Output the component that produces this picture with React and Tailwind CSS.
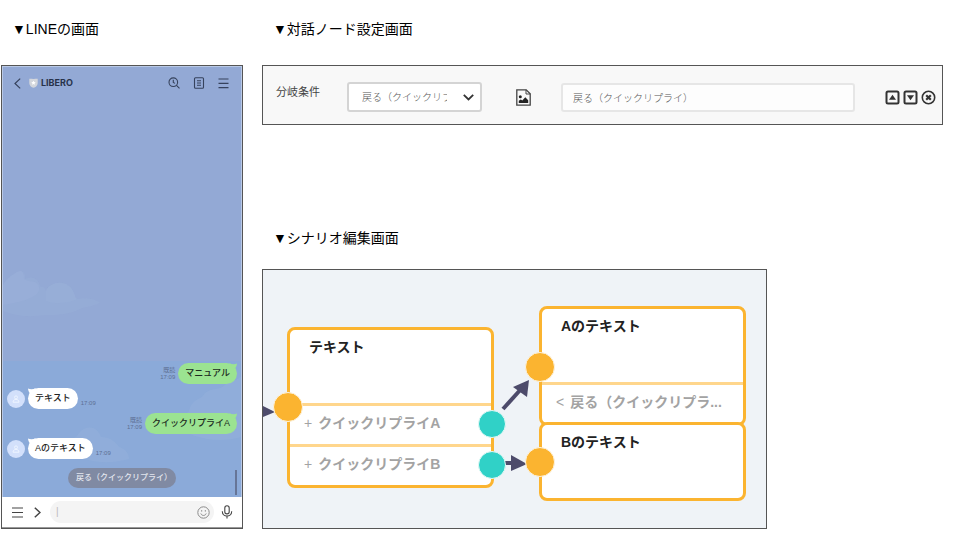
import { useState } from "react"

const messages = [
    { id: 1, from: 'user', text: 'マニュアル', time: '17:09' },
    { id: 2, from: 'bot', text: 'テキスト', time: '17:09' },
    { id: 3, from: 'user', text: 'クイックリプライA', time: '17:09' },
    { id: 4, from: 'bot', text: 'Aのテキスト', time: '17:09' },
];

const backLabel = '戻る（クイックリプライ）';

const shorten = (text, max) => (text.length > max ? `${text.slice(0, max)}...` : text);

const Heading = ({ children, className }) => (
    <h2 className={`pl-[11px] text-[14px] leading-5 text-black ${className}`}>{children}</h2>
);

const Cloud = () => (
    <svg className="absolute left-0 bottom-10 w-[100px] h-[54px]" viewBox="0 0 100 54" fill="#9db2dc">
        <path opacity=".3" d="M0 18C4 10 10 8 14 5c6-3 9 2 8 7 8-4 14 0 15 8 4-1 5 2 6 4 3-10 22-12 27 0 2 4 2 6 4 8 10-2 20 1 23 4-9 4-16 4-20 6-12 6-24 6-34 6-14 2-28 2-43-4z" />
        <path opacity=".35" d="M0 18C4 10 10 8 14 5c6-3 7 2 7 7 4 4 14 0 15 8 2 8-10 14-36 18z" />
        <path opacity=".3" d="M43 24c3-10 22-12 27 0 2 4 2 6 4 8-8 4-22 6-31 2z" />
    </svg>
);

const ChatCloud = () => (
    <svg className="absolute inset-0 w-full h-full" viewBox="0 0 238 136" preserveAspectRatio="none" fill="#9cb6df">
        <path opacity=".3" d="M168 60c6-8 14-4 18-10 4-14 12-10 16-18 8-6 14-2 20-8 4-4 10-4 16-8v60c-20 6-50 4-70-16z" />
        <path opacity=".3" d="M62 88c2-12 10-8 14-16 6-8 18-8 22 4 8 0 14 4 18 10 6 2 10 6 10 12-20 6-46 4-64-10z" />
    </svg>
);

const Avatar = () => (
    <span className="flex w-[18px] h-[18px] shrink-0 items-center justify-center rounded-full bg-[#d3e0fb]">
        <svg className="w-2 h-2" viewBox="0 0 8 8" fill="none" stroke="#eef4ff" strokeWidth="1">
            <circle cx="4" cy="2.4" r="1.5" />
            <path d="M1 7.2c0-2 1.6-2.8 3-2.8s3 .8 3 2.8z" />
        </svg>
    </span>
);

const UserMessage = ({ text, time }) => (
    <li className="flex items-center justify-end gap-[3px] pr-1">
        <div className="text-right text-[6px] leading-[7px] text-[#5d6f93]">
            <p>既読</p>
            <p>{time}</p>
        </div>
        <p className="relative h-[21px] rounded-full bg-[#9be391] px-[7px] text-[9px] leading-[20px] font-medium text-[#1c2a1e]">
            {text}
            <svg className="absolute right-0 top-0 w-2 h-2" viewBox="0 0 8 8" fill="#9be391">
                <path d="M0 0C3 1.6 6 1.4 8 .4 7.8 2.6 7 4.4 5.6 6z" />
            </svg>
        </p>
    </li>
);

const BotMessage = ({ text, time }) => (
    <li className="flex items-center pl-1">
        <Avatar />
        <p className="relative ml-[3px] h-[21px] rounded-full bg-white px-[7px] text-[9px] leading-[20px] font-medium text-[#222]">
            {text}
            <svg className="absolute left-0 top-0 w-2 h-2" viewBox="0 0 8 8" fill="#fff">
                <path d="M8 0C5 1.6 2 1.4 0 .4.2 2.6 1 4.4 2.4 6z" />
            </svg>
        </p>
        <span className="ml-[3px] self-end text-[6px] leading-[11px] text-[#5d6f93]">{time}</span>
    </li>
);

const LinePhone = () => {
    const [draft, setDraft] = useState('');

    return (
        <div className="border border-[#555]">
            <div className="border-x border-t border-[#b9c9e6]">
                <div className="relative flex min-h-[294px] flex-col bg-[#93a9d5]">
                    <header className="flex h-8 items-center pl-[11px] pr-3 text-[#36425c]">
                        <button type="button" aria-label="戻る">
                            <svg className="w-[7px] h-[11px]" viewBox="0 0 7 11" fill="none" stroke="currentColor" strokeWidth="1.2">
                                <path d="M6.2.6 1 5.5l5.2 4.9" />
                            </svg>
                        </button>
                        <svg className="ml-2 w-[9px] h-[10px]" viewBox="0 0 9 10">
                            <path d="M.3.8C3 .9 6 .9 8.7.8v4.4c0 2.4-2 3.8-4.2 4.6C2.3 9 .3 7.6.3 5.2z" fill="#d3d6dc" />
                            <path d="m4.5 2.8.7 1.3 1.5.2-1.1 1 .3 1.5-1.4-.7-1.4.7.3-1.5-1.1-1 1.5-.2z" fill="#fff" />
                        </svg>
                        <h1 className="ml-[3px] text-[9px] leading-4 font-bold text-[#27324a] font-['Inter','Liberation_Sans',sans-serif]">LIBERO</h1>
                        <div className="ml-auto flex items-center gap-[13px]">
                            <button type="button" aria-label="検索">
                                <svg className="w-3 h-3" viewBox="0 0 12 12" fill="none" stroke="currentColor" strokeWidth="1.1">
                                    <circle cx="5.3" cy="5.2" r="4.3" />
                                    <path d="m8.500 8.400 3 2.900M5.300 2.800v2.600l1.700 1" />
                                </svg>
                            </button>
                            <button type="button" aria-label="ノート">
                                <svg className="w-3 h-3" viewBox="0 0 12 12" fill="none" stroke="currentColor" strokeWidth="1.1">
                                    <rect x="1.5" y=".8" width="9" height="10.4" rx="1" />
                                    <path d="M4 3.800h4M4 6h4M4 8.200h4" />
                                </svg>
                            </button>
                            <button type="button" aria-label="メニュー">
                                <svg className="w-[11px] h-3" viewBox="0 0 11 12" fill="none" stroke="currentColor" strokeWidth="1.2">
                                    <path d="M.5 2h10M.5 6.300h10M.5 10.600h10" />
                                </svg>
                            </button>
                        </div>
                    </header>
                    <Cloud />
                </div>

                <div className="relative bg-[#8baad9] pt-[2px] pb-[9px]">
                    <ChatCloud />
                    <ul className="relative flex flex-col gap-1">
                        {messages.map(({ id, from, text, time }) =>
                            from === 'user'
                                ? <UserMessage key={id} text={text} time={time} />
                                : <BotMessage key={id} text={text} time={time} />
                        )}
                    </ul>
                    <button type="button" className="relative mx-auto mt-[9px] block h-5 rounded-full bg-[#808aa3] pl-2 pr-1 text-[8px] leading-5 font-medium text-[#e3e6ee]">
                        {backLabel}
                    </button>
                    <span className="absolute right-1 bottom-[2px] h-[25px] w-[2px] bg-[#667597]" />
                </div>
            </div>

            <footer className="flex h-[30px] items-center bg-white pl-[10px] pr-[9px] text-[#444]">
                <button type="button" aria-label="メニュー">
                    <svg className="w-[11px] h-[11px]" viewBox="0 0 11 11" fill="none" stroke="currentColor" strokeWidth="1.1">
                        <path d="M0 1h11M0 5.500h11M0 10h11" />
                    </svg>
                </button>
                <button type="button" aria-label="開く" className="ml-[11px]">
                    <svg className="w-[7px] h-[11px]" viewBox="0 0 7 11" fill="none" stroke="currentColor" strokeWidth="1.5">
                        <path d="m.8.8 5.200 4.700L.8 10.200" />
                    </svg>
                </button>
                <div className="ml-[9px] flex h-[22px] min-w-0 flex-1 items-center rounded-full bg-[#f4f4f4] pl-[6px] pr-1">
                    <input
                        type="text"
                        aria-label="メッセージ"
                        value={draft}
                        placeholder="|"
                        onChange={(e) => setDraft(e.target.value)}
                        className="w-full min-w-0 bg-transparent text-[10px] leading-4 outline-none placeholder:text-[#bbb]"
                    />
                    <button type="button" aria-label="スタンプ" className="text-[#8a8a8a]">
                        <svg className="w-[13px] h-[13px]" viewBox="0 0 13 13" fill="none" stroke="currentColor" strokeWidth="1">
                            <circle cx="6.5" cy="6.5" r="5.7" />
                            <path d="M3.800 7.500c.9 2.600 4.500 2.600 5.400 0" />
                            <path d="M4.600 4.300v1.200M8.400 4.300v1.200" strokeWidth="1.2" />
                        </svg>
                    </button>
                </div>
                <button type="button" aria-label="音声" className="ml-[7px]">
                    <svg className="w-3 h-[14px]" viewBox="0 0 12 14" fill="none" stroke="currentColor" strokeWidth="1.1">
                        <rect x="3.8" y=".7" width="4.4" height="8.2" rx="2.2" />
                        <path d="M1.300 6.200c0 6.400 9.400 6.400 9.400 0M6 11v2.500" />
                    </svg>
                </button>
            </footer>
            <div className="h-px bg-[#999]" />
        </div>
    );
};

const NodeSettings = () => {
    const [condition, setCondition] = useState('back');
    const [label, setLabel] = useState(backLabel);

    return (
        <form className="flex items-center border border-[#555] bg-[#f8f8f8] pt-4 pb-3 pl-[13px] pr-[6px] text-[#333]">
            <label htmlFor="condition" className="mb-[10px] w-[71px] shrink-0 text-[11px] leading-4 text-[#444]">分岐条件</label>
            <div className="relative w-[135px] shrink-0">
                <select
                    id="condition"
                    value={condition}
                    onChange={(e) => setCondition(e.target.value)}
                    className="block h-[30px] w-full appearance-none rounded-[3px] border-2 border-[#d4d4d4] bg-white pl-[13px] pr-[33px] text-[10px] font-light text-[#555]"
                >
                    <option value="back">{backLabel}</option>
                </select>
                <svg className="pointer-events-none absolute right-2 top-3 w-[11px] h-[7px]" viewBox="0 0 11 7" fill="none" stroke="#333" strokeWidth="1.8">
                    <path d="m.8.8 4.700 4.700L10.200.8" />
                </svg>
            </div>
            <button type="button" aria-label="画像" className="ml-[34px] shrink-0">
                <svg className="w-[15px] h-[17px]" viewBox="0 0 15 17" fill="none" stroke="#444" strokeWidth="1.3">
                    <path d="M.8.8h9.400l4 4v11.400H.8z" />
                    <path d="M10 .8v4.200h4.200" strokeWidth="1" />
                    <circle cx="4.3" cy="7.7" r="1.5" fill="#222" stroke="none" />
                    <path d="M2.800 14v-2.200l2-1.300 1.500 1 3-3.200 2.900 3V14z" fill="#222" stroke="none" />
                </svg>
            </button>
            <input
                type="text"
                aria-label="表示テキスト"
                value={label}
                onChange={(e) => setLabel(e.target.value)}
                className="ml-[30px] h-[29px] min-w-0 flex-1 rounded-[3px] border-2 border-[#e6e6e6] bg-[#fdfdfd] px-[10px] text-[10px] font-light text-[#555] outline-none"
            />
            <div className="ml-[30px] flex shrink-0 items-center gap-[3px]">
                <button type="button" aria-label="上へ">
                    <svg className="w-[15px] h-[15px]" viewBox="0 0 15 15" fill="none" stroke="#333" strokeWidth="2">
                        <rect x="1.5" y="1.5" width="12" height="12" rx="1.5" />
                        <path d="M7.500 4.800 11 9.700H4z" fill="#333" stroke="none" />
                    </svg>
                </button>
                <button type="button" aria-label="下へ">
                    <svg className="w-[15px] h-[15px]" viewBox="0 0 15 15" fill="none" stroke="#333" strokeWidth="2">
                        <rect x="1.5" y="1.5" width="12" height="12" rx="1.5" />
                        <path d="M7.500 10.200 11 5.300H4z" fill="#333" stroke="none" />
                    </svg>
                </button>
                <button type="button" aria-label="削除">
                    <svg className="w-[15px] h-[15px]" viewBox="0 0 15 15" fill="none" stroke="#333">
                        <circle cx="7.5" cy="7.5" r="6.2" strokeWidth="1.6" />
                        <path d="m5.200 5.200 4.600 4.600M9.800 5.200 5.200 9.800" strokeWidth="2.2" />
                    </svg>
                </button>
            </div>
        </form>
    );
};

const FlowNode = ({ title, replies = [], sign, className }) => (
    <div className={`absolute flex w-[207px] flex-col rounded-[8px] border-[3px] border-[#fbb430] bg-white ${className}`}>
        <h3 className="h-[73px] pt-[7px] pl-[19px] text-[14px] leading-5 font-bold text-[#222]">{title}</h3>
        {replies.map(reply => (
            <p key={reply} className="flex h-[41px] items-center gap-[6px] border-t-[3px] border-[#ffd68c] pb-[5px] pl-[14px] text-[14px] leading-5 font-bold whitespace-nowrap text-[#a3a3a3]">
                <span className="font-normal">{sign}</span>
                <span>{shorten(reply, 10)}</span>
            </p>
        ))}
    </div>
);

const InPort = ({ className }) => (
    <span className={`absolute h-[30px] w-[30px] rounded-full border border-[#fdf3df] bg-[#fbb430] ${className}`} />
);

const OutPort = ({ className }) => (
    <span className={`absolute h-[28px] w-[28px] rounded-full border border-[#e3f8f6] bg-[#30d1c7] ${className}`} />
);

const ScenarioCanvas = () => (
    <div className="relative min-h-[260px] w-full max-w-[505px] overflow-hidden border border-[#555] bg-[#eff3f7]">
        <FlowNode title="テキスト" sign="+" replies={['クイックリプライA', 'クイックリプライB']} className="left-6 top-[57px]" />
        <FlowNode title="Aのテキスト" sign="<" replies={[backLabel]} className="left-[276px] top-9" />
        <FlowNode title="Bのテキスト" className="left-[276px] top-[152px]" />
        <svg className="absolute left-0 top-0 h-[258px] w-[503px]" viewBox="0 0 503 258" fill="#4d4b6b" stroke="#4d4b6b">
            <path d="M0 136v11l12-5z" stroke="none" />
            <path d="m240 139 19-21" strokeWidth="4" fill="none" />
            <path d="m266 110-16 7 14 10z" stroke="none" />
            <path d="M242 193h8" strokeWidth="4" fill="none" />
            <path d="M248 185v16l16-7z" stroke="none" />
        </svg>
        <InPort className="left-[10px] top-[122px]" />
        <InPort className="left-[262px] top-[82px]" />
        <InPort className="left-[262px] top-[177px]" />
        <OutPort className="left-[215px] top-[140px]" />
        <OutPort className="left-[215px] top-[181px]" />
    </div>
);

const App = () => {
    return (
        <main className="flex items-start gap-[19px] bg-white pt-[19px] pl-px pr-[17px] font-['Liberation_Sans','Noto_Sans_CJK_JP',sans-serif]">
            <section className="w-[242px] shrink-0">
                <Heading className="mb-[26px]">▼LINEの画面</Heading>
                <LinePhone />
            </section>
            <div className="min-w-0 flex-1">
                <section>
                    <Heading className="mb-[26px]">▼対話ノード設定画面</Heading>
                    <NodeSettings />
                </section>
                <section className="mt-[103px]">
                    <Heading className="mb-[21px]">▼シナリオ編集画面</Heading>
                    <ScenarioCanvas />
                </section>
            </div>
        </main>
    );
};

export default App;
